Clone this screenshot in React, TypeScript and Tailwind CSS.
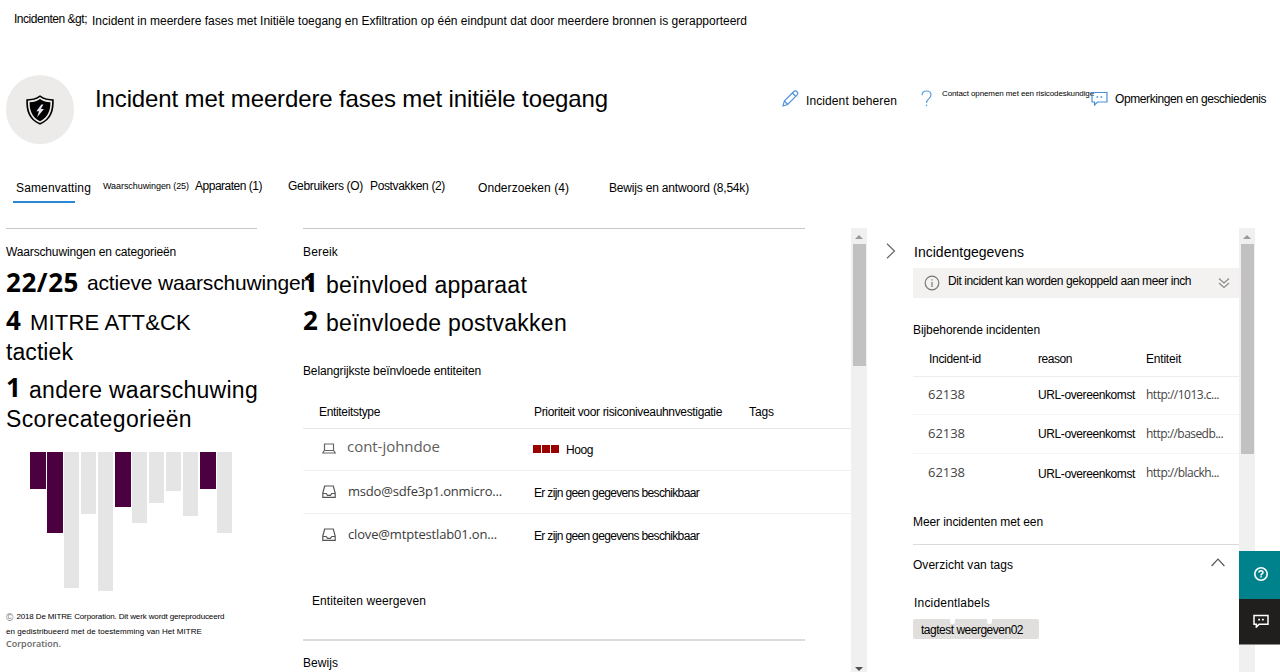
import { useLayoutEffect, useRef } from "react";
import type { ReactNode } from "react";

/** Single-line label whose tracking is adjusted so that it spans `w` pixels. */
function Fit({ w, className = "", children }: { w: number; className?: string; children: string }) {
  const ref = useRef<HTMLSpanElement>(null);
  useLayoutEffect(() => {
    const el = ref.current;
    if (!el) return;
    el.style.letterSpacing = "0px";
    const natural = el.getBoundingClientRect().width;
    el.style.letterSpacing = `${(w - natural) / children.length}px`;
  }, [w, children]);
  return (
    <span ref={ref} className={`block w-max shrink-0 whitespace-pre ${className}`}>
      {children}
    </span>
  );
}

const ui = "font-['Open_Sans','Noto_Sans',sans-serif]";

function Shield() {
  return (
    <svg viewBox="0 0 30 32" className="h-[32px] w-[30px]" fill="none">
      <path d="M15 1.2C11 4.4 6 5.2 1.3 5.3 0.9 16 2.8 25.500 15 30.800 27.200 25.500 29.100 16 28.700 5.300 24 5.200 19 4.400 15 1.200Z" fill="#000" />
      <path d="M15 3.100C11.500 5.700 7 6.600 2.900 6.700 2.800 15.500 4.600 24.400 15 29.100 25.400 24.400 27.200 15.500 27.100 6.700 23 6.600 18.500 5.700 15 3.100Z" fill="#ecebe9" />
      <path d="M15 4.900C12 7.200 8.300 8 4.600 8.200 4.600 15.500 6.200 22.800 15 27.300 23.800 22.800 25.400 15.500 25.400 8.200 21.700 8 18 7.200 15 4.900Z" fill="#000" />
      <path d="M16.300 10.500 11.400 17.200H14l-1.900 6 6.900-8.200h-3.100l2.500-4.500Z" fill="#e4e3f0" />
    </svg>
  );
}

function Pencil() {
  return (
    <svg viewBox="0 0 17 17" className="h-[17px] w-[17px]" fill="none" stroke="#4a8fdc" strokeWidth="1.1">
      <path d="M1 16l1.300-5L11.800 1.500a2 2 0 0 1 2.900 0l.5.5a2 2 0 0 1 0 2.900L5.700 14.500Z" />
      <path d="M10.300 3l3.500 3.500M2.300 11l3.500 3.500" />
    </svg>
  );
}

function Question() {
  return (
    <svg viewBox="0 0 11 17" className="h-[17px] w-[11px]" fill="none" stroke="#5d9be0" strokeWidth="1.2">
      <path d="M1 5.200C1 2.500 2.900 1 5.500 1s4.500 1.500 4.500 4c0 3.500-4.500 3.800-4.500 8" />
      <path d="M5.500 14.600v1.700" />
    </svg>
  );
}

function Comment({ className, weight, dots }: { className: string; weight: number; dots: number }) {
  return (
    <svg viewBox="0 0 17 15" className={className} fill="none" stroke="currentColor">
      <path d="M1 1.500h15v9.500H6.500L3.500 14v-3H1Z" strokeWidth={weight} />
      <path d={`M5.500 6h${dots}M9.500 6h${dots}`} strokeWidth={dots} />
    </svg>
  );
}

function Laptop() {
  return (
    <svg viewBox="0 0 14 11" className="h-[11px] w-[14px]" fill="none" stroke="#666" strokeWidth="1.200">
      <path d="M2.500 7.500V1h9v6.500M2.300 7.500h9.400l1.600 2.500H.7Z" />
    </svg>
  );
}

function Inbox() {
  return (
    <svg viewBox="0 0 14 13" className="h-[13px] w-[14px]" fill="none" stroke="#555" strokeWidth="1.200">
      <path d="M.8 8 2.700 1h8.600l1.900 7v4.300H.8ZM.8 8.500h3.400l1.300 1.800h3l1.300-1.800h3.400" />
    </svg>
  );
}

function Scrollbar({ thumb, down }: { thumb: string; down?: boolean }) {
  return (
    <div className="flex h-full w-4 shrink-0 flex-col items-center justify-between bg-[#f0f0f0]">
      <div className="flex flex-col items-center">
        <svg viewBox="0 0 8 4" className="mt-[7px] mb-[5px] h-1 w-2" fill="#9a9a9a">
          <path d="M4 0l4 4H0Z" />
        </svg>
        <div className={`w-[13px] bg-[#c1c1c1] ${thumb}`} />
      </div>
      {down && (
        <svg viewBox="0 0 8 4" className="mb-px h-1 w-2" fill="#505050">
          <path d="M0 0h8L4 4Z" />
        </svg>
      )}
    </div>
  );
}

const bars = [
  { on: true, h: "h-[37px]" },
  { on: true, h: "h-[81px]" },
  { on: false, h: "h-[136px]" },
  { on: false, h: "h-[62px]" },
  { on: false, h: "h-[139px]" },
  { on: true, h: "h-[55px]" },
  { on: false, h: "h-[71px]" },
  { on: false, h: "h-[51px]" },
  { on: false, h: "h-[39px]" },
  { on: false, h: "h-[64px]" },
  { on: true, h: "h-[37px]" },
  { on: false, h: "h-[81px]" },
];

function Count({ w, children }: { w: number; children: string }) {
  return (
    <Fit w={w} className={`${ui} text-[26px] leading-9 font-bold`}>
      {children}
    </Fit>
  );
}

function Header() {
  return (
    <header className="shrink-0">
      <nav className="flex h-[62px] pt-[11px] pl-[14px]">
        <Fit w={73}>Incidenten &amp;gt;</Fit>
        <Fit w={655} className="mt-0.5 ml-[5px]">
          Incident in meerdere fases met Initiële toegang en Exfiltration op één eindpunt dat door meerdere bronnen is gerapporteerd
        </Fit>
      </nav>
      <div className="flex h-[109px] pl-[6px]">
        <div className="mt-[13px] flex h-[69px] w-[68px] items-center justify-center rounded-full bg-[#ecebe9]">
          <Shield />
        </div>
        <h1 className="mt-[21px] ml-[21px] w-[688px]">
          <Fit w={513} className="text-[24px] leading-[31px]">
            Incident met meerdere fases met initiële toegang
          </Fit>
        </h1>
        <div className="mt-[28px] -ml-px">
          <Pencil />
        </div>
        <Fit w={91} className="mt-[31px] ml-[7px]">Incident beheren</Fit>
        <div className="mt-[28px] ml-[24px]">
          <Question />
        </div>
        <Fit w={152} className="mt-[26px] ml-[10px] text-[8px] leading-[11px]">
          Contact opnemen met een risicodeskundige
        </Fit>
        <div className="mt-[29px] -ml-[3px]">
          <Comment className="h-[15px] w-[17px] text-[#4a8fdc]" weight={1.2} dots={1.7} />
        </div>
        <Fit w={151} className="mt-[29px] ml-[7px]">Opmerkingen en geschiedenis</Fit>
      </div>
      <div className="flex h-[57px] pl-[13px]">
        <div className="flex h-8 w-[62px] flex-col border-b-2 border-[#2b88d8] pt-[9px] pl-[3px]">
          <Fit w={75}>Samenvatting</Fit>
        </div>
        <Fit w={86} className="mt-[10px] ml-[28px] text-[9px] leading-[11px]">Waarschuwingen (25)</Fit>
        <Fit w={67} className="mt-[7px] ml-[6px]">Apparaten (1)</Fit>
        <Fit w={75} className="mt-[7px] ml-[26px]">Gebruikers (O)</Fit>
        <Fit w={75} className="mt-[7px] ml-[7px]">Postvakken (2)</Fit>
        <Fit w={91} className="mt-[9px] ml-[33px]">Onderzoeken (4)</Fit>
        <Fit w={140} className="mt-[9px] ml-[40px]">Bewijs en antwoord (8,54k)</Fit>
      </div>
    </header>
  );
}

function Alerts() {
  return (
    <section className="w-[303px] shrink-0 pl-[6px]">
      <div className="h-px w-[251px] bg-[#c8c8c8]" />
      <Fit w={170} className="mt-[15px]">Waarschuwingen en categorieën</Fit>
      <div className="mt-1 flex h-[38px]">
        <Count w={73}>22/25</Count>
        <Fit w={225} className="mt-1 ml-[8px] text-[21px] leading-[29px]">actieve waarschuwingen</Fit>
      </div>
      <div className="flex h-9">
        <Count w={16}>4</Count>
        <Fit w={161} className="mt-1.5 ml-[8px] text-[22px] leading-[29px]">MITRE ATT&amp;CK</Fit>
      </div>
      <Fit w={67} className="text-[23px] leading-[28px]">tactiek</Fit>
      <div className="mt-[3px] flex h-9">
        <Count w={16}>1</Count>
        <Fit w={229} className="mt-[7px] ml-[7px] text-[23px] leading-[28px]">andere waarschuwing</Fit>
      </div>
      <Fit w={186} className="text-[23px] leading-[28px]">Scorecategorieën</Fit>
      <div className="mt-[19px] ml-[24px] flex h-[139px]">
        {bars.map((bar, i) => (
          <div key={i} className="w-[17px]">
            <div className={`${bar.on ? "w-4 bg-[#4b003f]" : "w-[15px] bg-[#e5e5e5]"} ${bar.h}`} />
          </div>
        ))}
      </div>
      <div className="mt-[20px] flex text-[8px] leading-[11px]">
        <span className="mt-px text-[10px] text-[#777]">©</span>
        <Fit w={208} className="ml-[3px]">2018 De MITRE Corporation. Dit werk wordt gereproduceerd</Fit>
      </div>
      <Fit w={196} className="mt-[3px] text-[8px] leading-[11px]">
        en gedistribueerd met de toestemming van Het MITRE
      </Fit>
      <Fit w={55} className={`${ui} text-[9px] leading-[13px] font-semibold text-[#666]`}>Corporation.</Fit>
    </section>
  );
}

function EntityRow({ icon, name, row, children }: { icon: ReactNode; name: ReactNode; row: string; children: ReactNode }) {
  return (
    <div className={`flex ${row}`}>
      <div className="flex w-[230px] shrink-0 pl-[19px]">
        <div className="mt-[14px] w-[25px]">{icon}</div>
        {name}
      </div>
      {children}
    </div>
  );
}

function Scope() {
  return (
    <section className="w-[548px] shrink-0">
      <div className="h-px w-[502px] bg-[#c8c8c8]" />
      <Fit w={35} className="mt-[15px]">Bereik</Fit>
      <div className="mt-1 flex h-[38px]">
        <Count w={16}>1</Count>
        <Fit w={201} className="mt-[7px] ml-[7px] text-[23px] leading-[28px]">beïnvloed apparaat</Fit>
      </div>
      <div className="flex h-9">
        <Count w={16}>2</Count>
        <Fit w={241} className="mt-[7px] ml-[7px] text-[23px] leading-[28px]">beïnvloede postvakken</Fit>
      </div>
      <Fit w={178} className="mt-[25px]">Belangrijkste beïnvloede entiteiten</Fit>
      <div className="mt-[25px] flex h-[25px] border-b border-[#e6e6e6]">
        <div className="w-[231px] pl-[16px]">
          <Fit w={61}>Entiteitstype</Fit>
        </div>
        <div className="w-[215px]">
          <Fit w={188}>Prioriteit voor risiconiveauhnvestigatie</Fit>
        </div>
        <Fit w={25}>Tags</Fit>
      </div>
      <EntityRow
        row="h-[42px] border-b border-[#f1f1f1]"
        icon={<Laptop />}
        name={<Fit w={93} className={`${ui} mt-[6px] text-[15px] leading-[22px] text-[#605e5c]`}>cont-johndoe</Fit>}
      >
        <div className="mt-[16px] flex h-2 gap-px">
          <div className="w-2 bg-[#990000]" />
          <div className="w-2 bg-[#990000]" />
          <div className="w-2 bg-[#990000]" />
        </div>
        <Fit w={27} className="mt-[13px] ml-[7px]">Hoog</Fit>
      </EntityRow>
      <EntityRow
        row="h-[43px] border-b border-[#f1f1f1]"
        icon={<Inbox />}
        name={<Fit w={154} className={`${ui} mt-[11px] ml-px text-[13px] leading-[18px] text-[#3b3a39]`}>msdo@sdfe3p1.onmicro...</Fit>}
      >
        <Fit w={165} className="mt-[14px] ml-px">Er zijn geen gegevens beschikbaar</Fit>
      </EntityRow>
      <EntityRow
        row="h-[43px]"
        icon={<Inbox />}
        name={<Fit w={149} className={`${ui} mt-[11px] ml-px text-[13px] leading-[18px] text-[#3b3a39]`}>clove@mtptestlab01.on...</Fit>}
      >
        <Fit w={165} className="mt-[14px] ml-px">Er zijn geen gegevens beschikbaar</Fit>
      </EntityRow>
      <Fit w={114} className="mt-[36px] ml-[9px]">Entiteiten weergeven</Fit>
      <div className="mt-[30px] h-[2px] w-[502px] bg-[#dcdcdc]" />
      <Fit w={35} className="mt-[14px]">Bewijs</Fit>
    </section>
  );
}

const incidents = [
  { url: "http://1013.c...", w: 73, row: "h-[38px] pt-[8px] border-b", reason: "mt-[2px]" },
  { url: "http://basedb...", w: 77, row: "h-[39px] pt-[9px] border-b", reason: "mt-[2px]" },
  { url: "http://blackh...", w: 73, row: "h-[39px] pt-[9px]", reason: "mt-[3px]" },
];

function Details() {
  return (
    <section className="flex w-[372px] shrink-0">
      <div className="w-[46px] shrink-0 pt-[15px] pl-[19px]">
        <svg viewBox="0 0 10 16" className="h-4 w-[10px]" fill="none" stroke="#666" strokeWidth="1.200">
          <path d="M1 .8 8.500 8 1 15.200" />
        </svg>
      </div>
      <div className="w-[326px] shrink-0">
        <Fit w={110} className="mt-[16px] ml-px text-[14px] leading-4">Incidentgegevens</Fit>
        <div className="mt-2 flex h-[30px] bg-[#f3f2f1] pl-[11px]">
          <svg viewBox="0 0 16 16" className="mt-[7px] h-4 w-4" fill="none" stroke="#777" strokeWidth="1.200">
            <circle cx="8" cy="8" r="6.800" />
            <path d="M8 7v5M8 4.200v1.400" />
          </svg>
          <Fit w={243} className="mt-[5px] ml-[8px]">Dit incident kan worden gekoppeld aan meer inch</Fit>
          <svg viewBox="0 0 12 12" className="mt-[9px] ml-[27px] h-3 w-3" fill="none" stroke="#888" strokeWidth="1.100">
            <path d="M1 1.500l5 4.500 5-4.500M1 6l5 4.500L11 6" />
          </svg>
        </div>
        <Fit w={127} className="mt-[24px]">Bijbehorende incidenten</Fit>
        <div className="mt-[13px] flex h-[26px] border-b border-[#ededed]">
          <div className="w-[125px] pl-[16px]">
            <Fit w={52}>Incident-id</Fit>
          </div>
          <div className="w-[108px]">
            <Fit w={34}>reason</Fit>
          </div>
          <Fit w={35}>Entiteit</Fit>
        </div>
        {incidents.map((it) => (
          <div key={it.url} className={`flex border-[#f4f4f4] ${it.row}`}>
            <div className="w-[125px] pl-[15px]">
              <Fit w={37} className={`${ui} text-[13px] leading-[18px] text-[#444]`}>62138</Fit>
            </div>
            <div className="w-[108px]">
              <Fit w={97} className={it.reason}>URL-overeenkomst</Fit>
            </div>
            <Fit w={it.w} className={`${ui} mt-px text-[12px] leading-[17px] text-[#444]`}>{it.url}</Fit>
          </div>
        ))}
        <Fit w={130} className="mt-[21px]">Meer incidenten met een</Fit>
        <div className="mt-[14px] h-px bg-[#dadada]" />
        <div className="mt-[12px] flex justify-between pr-[14px]">
          <Fit w={100}>Overzicht van tags</Fit>
          <svg viewBox="0 0 14 9" className="mt-px h-[9px] w-[14px]" fill="none" stroke="#555" strokeWidth="1.200">
            <path d="M.6 8 7 1.200 13.400 8" />
          </svg>
        </div>
        <Fit w={76} className="mt-[22px] ml-px">Incidentlabels</Fit>
        <div className="relative mt-2 flex h-5 w-[126px] rounded-xs bg-[#e1dfdd] pt-[3px] pl-[8px]">
          <i className="absolute top-0 left-[37px] h-[5px] w-[5px] rounded-b-xs bg-white" />
          <i className="absolute top-0 left-[74px] h-[5px] w-[5px] rounded-b-xs bg-white" />
          <Fit w={102}>tagtest weergeven02</Fit>
        </div>
      </div>
    </section>
  );
}

export default function App() {
  return (
    <main className="relative flex h-[672px] w-[1280px] flex-col overflow-hidden bg-white font-['Liberation_Sans',Arial,sans-serif] text-[12px] leading-4 text-black">
      <Header />
      <div className="flex h-[444px]">
        <Alerts />
        <Scope />
        <Scrollbar thumb="h-[122px]" down />
        <Details />
        <Scrollbar thumb="h-[210px]" />
      </div>
      <div className="absolute top-[551px] right-0 w-[41px]">
        <div className="flex h-[48px] items-center justify-center bg-[#00828c] pb-[2px] pl-[3px]">
          <svg viewBox="0 0 16 16" className="h-4 w-4" fill="none" stroke="#fff">
            <circle cx="8" cy="8" r="6.200" strokeWidth="1.600" />
            <path d="M6 6.600C6 5.300 6.900 4.700 8 4.700s2 .7 2 1.800c0 1.400-2 1.500-2 2.900M8 10.300v1.300" strokeWidth="1.600" />
          </svg>
        </div>
        <div className="flex h-[46px] items-center justify-center border-b border-[#8a8a8a] bg-[#201f1e] pb-px pl-[3px]">
          <Comment className="h-[14px] w-[16px] text-white" weight={1.6} dots={2} />
        </div>
      </div>
    </main>
  );
}
